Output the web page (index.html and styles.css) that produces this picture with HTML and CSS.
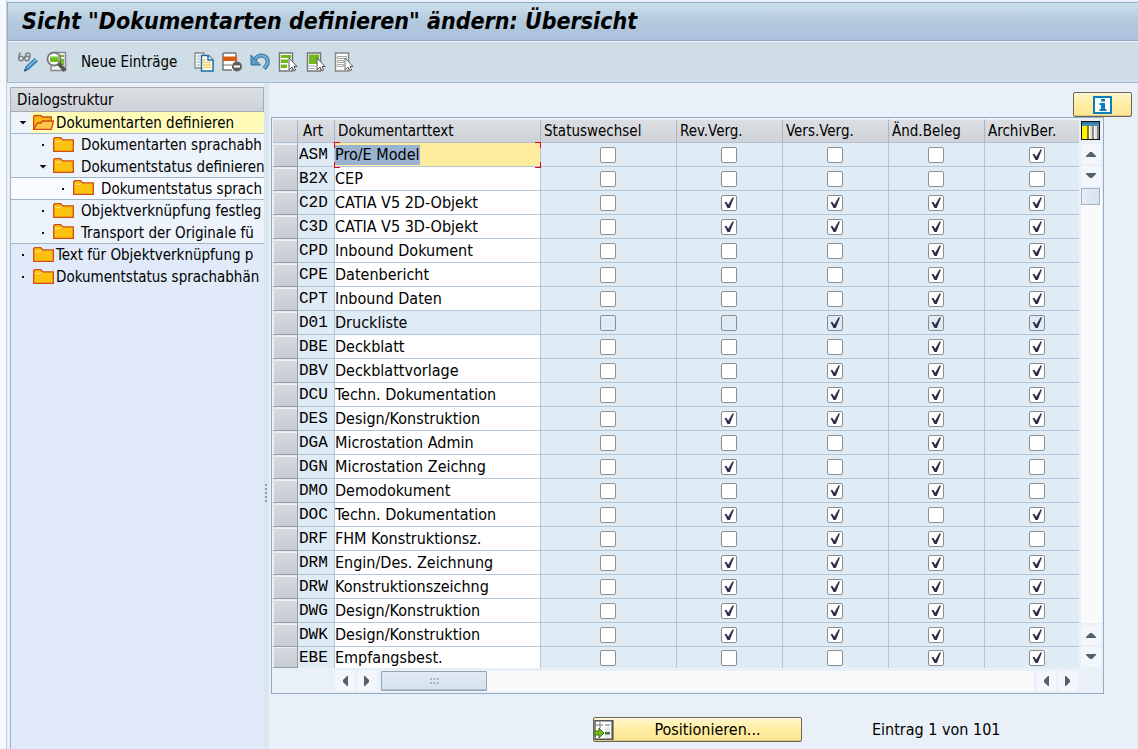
FILE: index.html
```html
<!DOCTYPE html>
<html lang="de">
<head>
<meta charset="utf-8">
<title>Sicht "Dokumentarten definieren" ändern: Übersicht</title>
<link rel="stylesheet" href="styles.css">
</head>
<body>
<svg class="sprite" aria-hidden="true">
  <symbol id="folder" viewBox="0 0 21 17"><path d="M.7 14.300V1.700l1-1h6l2 2.200h10.600v11.400z" fill="#fdc20f" stroke="#cf4a17" stroke-width="1.300"/><path d="M2 4.500h5l2-1.200" fill="none" stroke="#ffe07a"/></symbol>
  <symbol id="folder-open" viewBox="0 0 21 17"><path d="M.7 15.300V2.500l1-1h6l2 1.500h8.600v4" fill="#fdb913" stroke="#cf4a17" stroke-width="1.300"/><path d="M.7 15.300 4.500 9H8l1.500-2h11l-2.200 8.300z" fill="#fdc84a" stroke="#cf4a17" stroke-width="1.300"/></symbol>
</svg>
<div class="window">
  <header class="titlebar"><h1>Sicht "Dokumentarten definieren" ändern: Übersicht</h1></header>
  <div class="toolbar" role="toolbar" aria-label="Anwendung">
    <button class="tool wide" aria-label="Anzeigen/Ändern"><svg width="22" height="22" viewBox="0 0 22 22"><g fill="none" stroke="#777" stroke-width="1.300"><circle cx="4" cy="7.500" r="2.300"/><circle cx="10" cy="7.500" r="2.300"/><path d="M1.700 7 2.500 2.500 4 2M7.700 7 9 2.500l2-.5 2 1v4"/></g><path d="M7 20.500 8.500 15.500 17.500 7l3.500 3.200-9.500 8.800z" fill="#3385b5"/><path d="m10 17 9-8.500" stroke="#8fc3e0" stroke-width="1.200"/><path d="m7 20.500.8-2.800 2 2z" fill="#444"/></svg></button>
    <button class="tool wide" aria-label="Details"><svg width="22" height="22" viewBox="0 0 22 22"><path d="M10 1.500h9.500v18H5V15" fill="#eef2f4" stroke="#888" stroke-width="1.500"/><path d="M14 4h4v2h-4zM14 8h4v6h-4z" fill="#77b82a"/><circle cx="8" cy="8" r="6.500" fill="#fff" stroke="#777" stroke-width="1.800"/><path d="M4 5h9v6H4z" fill="#73b81c"/><path d="M4 5h9v1.500H4z" fill="#b5d98a"/><path d="m12.500 12.500 6.500 7" stroke="#555" stroke-width="4"/></svg></button>
    <button class="tool text">Neue Einträge</button>
    <button class="tool" aria-label="Kopieren als"><svg width="20" height="20" viewBox="0 0 20 20"><path d="M7 16H1V1h9v3" fill="#f4f7f9" stroke="#888" stroke-width="1.300"/><path d="M3 4h3M3 7h3M3 10h3M3 13h3" stroke="#aaa"/><path d="M7.500 3.500h7l4.500 4.500v11H7.500z" fill="#fff" stroke="#1c6ea4" stroke-width="1.500"/><path d="M14 3.500V8h5" fill="#fff" stroke="#1c6ea4" stroke-width="1.500"/><path d="M9 8h3M9 10.500h8M9 13h8M9 15.500h8" stroke="#f8cf55" stroke-width="1.600"/></svg></button>
    <button class="tool" aria-label="Löschen"><svg width="20" height="20" viewBox="0 0 20 20"><path d="M1 1h13v17H1z" fill="#fff"/><path d="M14 1v9M1 1h13M1 1v17h9" fill="none" stroke="#777" stroke-width="1.500"/><path d="M1 4.500h14V9H1z" fill="#db5a12"/><path d="M1 13h9" stroke="#777"/><circle cx="15" cy="14.500" r="5" fill="#606060"/><path d="M12 14.500h6" stroke="#fff" stroke-width="2"/></svg></button>
    <button class="tool" aria-label="Änderung zurücknehmen"><svg width="20" height="20" viewBox="0 0 20 20"><path d="M4 9C6 4.500 10 2.500 14 4c5 2.500 5 8 0 12.500" fill="none" stroke="#2f739f" stroke-width="4"/><path d="M4 9C6 4.500 10 2.500 14 4c5 2.500 5 8 0 12" fill="none" stroke="#78b0d3" stroke-width="2"/><path d="M1 3v10h9.500L7.500 10 4.500 7z" fill="#5b9dc6" stroke="#2f739f"/></svg></button>
    <button class="tool" aria-label="Alle markieren"><svg width="20" height="20" viewBox="0 0 20 20"><path d="M1.500 1h13v18h-13z" fill="#fff" stroke="#777" stroke-width="1.500"/><path d="M3 3h10v3H3zM3 7.500h7v3.500H3zM3 12.500h6V16H3z" fill="#73b81c"/><path d="M11 6v12l3-3 2 4 1.700-1-1.700-3.500h3z" fill="#fff" stroke="#555"/></svg></button>
    <button class="tool" aria-label="Block markieren"><svg width="20" height="20" viewBox="0 0 20 20"><path d="M1.500 1h13v18h-13z" fill="#fff" stroke="#777" stroke-width="1.500"/><path d="M3 2.500h10V12H3z" fill="#73b81c"/><path d="M3 14h6M3 16.500h6" stroke="#aaa"/><path d="M11 6v12l3-3 2 4 1.700-1-1.700-3.500h3z" fill="#fff" stroke="#555"/></svg></button>
    <button class="tool" aria-label="Alle entmarkieren"><svg width="20" height="20" viewBox="0 0 20 20"><path d="M1.500 1h13v18h-13z" fill="#fff" stroke="#888" stroke-width="1.500"/><path d="M3.500 4.500h9v2h-9zM3.500 8.500h6v2h-6zM3.500 12.500h6v2h-6z" fill="none" stroke="#aaa"/><path d="M11 6v12l3-3 2 4 1.700-1-1.700-3.500h3z" fill="#fff" stroke="#666"/></svg></button>
  </div>
  <div class="work">
    <nav class="tree" aria-label="Dialogstruktur">
      <h2>Dialogstruktur</h2>
      <ul>
        <li class="selected"><span class="mark open"></span><a href="#"><svg class="folder"><use href="#folder-open"/></svg>Dokumentarten definieren</a></li>
        <li class="l2"><span class="mark"></span><a href="#"><svg class="folder"><use href="#folder"/></svg>Dokumentarten sprachabh</a></li>
        <li class="l2 line"><span class="mark open"></span><a href="#"><svg class="folder"><use href="#folder"/></svg>Dokumentstatus definieren</a></li>
        <li class="l3 line"><span class="mark"></span><a href="#"><svg class="folder"><use href="#folder"/></svg>Dokumentstatus sprach</a></li>
        <li class="l2"><span class="mark"></span><a href="#"><svg class="folder"><use href="#folder"/></svg>Objektverknüpfung festleg</a></li>
        <li class="l2 line"><span class="mark"></span><a href="#"><svg class="folder"><use href="#folder"/></svg>Transport der Originale fü</a></li>
        <li><span class="mark"></span><a href="#"><svg class="folder"><use href="#folder"/></svg>Text für Objektverknüpfung p</a></li>
        <li><span class="mark"></span><a href="#"><svg class="folder"><use href="#folder"/></svg>Dokumentstatus sprachabhän</a></li>
      </ul>
    </nav>
    <div class="splitter"><svg width="4" height="18" viewBox="0 0 4 18"><path d="M2 0v18" stroke="#8fa0ae" stroke-width="2" stroke-dasharray="2 2"/></svg></div>
    <main class="content">
      <div class="info-row"><button class="gold info" aria-label="Information"><svg width="19" height="18" viewBox="0 0 19 18"><path d="M1 1h17v16H1z" fill="#fff" stroke="#0a7fc0" stroke-width="2"/><path d="M8 3h4v2.500H8zM6.500 7H12v6h1.500v2h-7v-2H8V9H6.500z" fill="#0a7fc0"/></svg></button></div>
      <div class="control">
        <div class="grid-row">
          <table>
            <colgroup><col class="c-sel"><col class="c-art"><col><col class="c-status"><col class="c-flag"><col class="c-flag"><col class="c-and"><col class="c-arch"></colgroup>
            <thead><tr><th aria-label="Markieren"></th><th class="art-head">Art</th><th>Dokumentarttext</th><th>Statuswechsel</th><th>Rev.Verg.</th><th>Vers.Verg.</th><th>Änd.Beleg</th><th>ArchivBer.</th></tr></thead>
            <tbody id="rows"></tbody>
          </table>
          <div class="vscroll">
            <button class="config" aria-label="Konfiguration"><svg width="19" height="19" viewBox="0 0 19 19"><path d="M0 0h19v19H0z" fill="#111"/><path d="M1 1h17v17H1z" fill="#fff"/><path d="M1 1h17v4H1z" fill="#3d8fc4"/><path d="M1 2h17" stroke="#226a9b"/><path d="M1 5h5v13H1z" fill="#fff200"/><path d="M6 4h2v14H6z" fill="#8a7c00"/><path d="M9 5h2v13H9zM14 5h2v13h-2z" fill="#ddd"/><path d="M11 4h2v14h-2zM16 4h2v14h-2z" fill="#888"/></svg></button>
            <button class="arrow" aria-label="Nach oben"><svg width="12" height="6" viewBox="0 0 12 6"><path d="M1 6V5l4-4h2l4 4v1z" fill="#52616b"/></svg></button>
            <button class="arrow" aria-label="Zeile nach unten"><svg width="12" height="6" viewBox="0 0 12 6"><path d="M1 0v1l4 4h2l4-4V0z" fill="#52616b"/></svg></button>
            <div class="vtrack"><div class="vthumb"></div></div>
            <button class="arrow" aria-label="Zeile nach oben"><svg width="12" height="6" viewBox="0 0 12 6"><path d="M1 6V5l4-4h2l4 4v1z" fill="#52616b"/></svg></button>
            <button class="arrow" aria-label="Nach unten"><svg width="12" height="6" viewBox="0 0 12 6"><path d="M1 0v1l4 4h2l4-4V0z" fill="#52616b"/></svg></button>
          </div>
        </div>
        <div class="hscroll">
          <button class="arrow" aria-label="Nach links"><svg width="6" height="12" viewBox="0 0 6 12"><path d="M6 1H5L1 5v2l4 4h1z" fill="#52616b"/></svg></button>
          <button class="arrow" aria-label="Spalte nach rechts"><svg width="6" height="12" viewBox="0 0 6 12"><path d="M0 1h1l4 4v2l-4 4H0z" fill="#52616b"/></svg></button>
          <div class="htrack"><div class="hthumb"><svg width="9" height="6" viewBox="0 0 9 6"><path d="M0 1h9M0 5h9" stroke="#94a6b5" stroke-width="1.500" stroke-dasharray="2 1.500"/></svg></div></div>
          <button class="arrow" aria-label="Spalte nach links"><svg width="6" height="12" viewBox="0 0 6 12"><path d="M6 1H5L1 5v2l4 4h1z" fill="#52616b"/></svg></button>
          <button class="arrow" aria-label="Nach rechts"><svg width="6" height="12" viewBox="0 0 6 12"><path d="M0 1h1l4 4v2l-4 4H0z" fill="#52616b"/></svg></button>
        </div>
      </div>
      <footer class="position">
        <button class="gold goto"><svg width="20" height="20" viewBox="0 0 20 20"><path d="M1 .7h17.500v18.600H1z" fill="#fff" stroke="#555" stroke-width="1.400"/><path d="M17.500 0h2v20h-2z" fill="#555"/><path d="M2 5h7M6 2v6M11 5h5" stroke="#999" stroke-width="1.300"/><path d="M11 7h5v11h-5z" fill="#e8e8e8"/><path d="M11 12h5v2.500h-5z" fill="#2f7d46"/><path d="M0 11h5V8l5 5-5 5V15H0z" fill="#73b81c" stroke="#397316"/></svg><span>Positionieren...</span></button>
        <p>Eintrag 1 von 101</p>
      </footer>
    </main>
  </div>
</div>
<script src="rows.js"></script>
</body>
</html>
```
FILE: styles.css
```css
* { box-sizing: border-box; }
body, h1, h2, p, ul { margin: 0; padding: 0; }
body {
  background: #f4f7fb;
  color: #000;
  font: 16px/22px "DejaVu Sans Condensed", "Noto Sans", sans-serif;
}
button, input { font: inherit; color: inherit; margin: 0; padding: 0; border: 0; }
button { background: none; }
svg { display: block; flex: none; }
.sprite { position: absolute; width: 0; height: 0; }
.window {
  display: flex;
  flex-direction: column;
  min-height: 100vh;
  margin-left: 6px;
  padding-top: 2px;
  background: #e9f0f8;
  border-left: 1px solid #c3d0dc;
}
.titlebar {
  padding: 1px 14px 2px;
  border: 1px solid #8fabc7;
  border-right: 0;
  background: linear-gradient(#cddfec, #b3c9dc 50%, #abc1dc);
}
.titlebar h1 { font-size: 23px; line-height: 34px; font-style: italic; font-weight: 700; white-space: nowrap; }
.toolbar {
  display: flex;
  align-items: center;
  gap: 8px;
  height: 42px;
  padding: 0 9px;
  border: 1px solid #a5b9cd;
  border-top: 1px solid #edf4f8;
  border-right: 0;
  background: #cfdde7;
}
.tool.wide { width: 21px; }
.tool.text { margin: 0 9px 0 6px; font-size: 15px; white-space: nowrap; }
.work { display: flex; flex: 1; padding-left: 3px; }
.tree {
  width: 254px;
  margin-top: 4px;
  flex: none;
  overflow: hidden;
  background: #e0eaf8;
  border-left: 1px solid #9db3c9;
}
.tree h2 {
  height: 25px;
  padding: 0 6px;
  border: 1px solid #a6adb5;
  border-left: 0;
  background: linear-gradient(#dcdfe2, #cdd1d7);
  font-size: 15px;
  line-height: 24px;
  font-weight: 400;
}
.tree ul { list-style: none; }
.tree li { display: flex; height: 22px; white-space: nowrap; background: #e0eaf8; }
.tree .l2 { padding-left: 20px; background: #ecf3fb; }
.tree .l3 { padding-left: 40px; background: #f8fbff; }
.tree .line, .tree .selected { border-bottom: 1px solid #a3b6c9; }
.tree .selected { background: #ecf3fb; }
.tree a { display: flex; flex: 1; align-items: center; gap: 2px; padding-left: 2px; color: #000; font-size: 15px; text-decoration: none; }
.tree .l2 a, .tree .l3 a { gap: 7px; }
.tree .selected a { background: #fffcba; }
.folder { width: 21px; height: 17px; }
.mark { display: grid; place-items: center; width: 20px; padding-left: 4px; flex: none; }
.mark::before { content: ""; width: 2px; height: 2px; background: #111; }
.mark.open::before { width: 8px; height: 4px; clip-path: polygon(0 0, 100% 0, 50% 100%); }
.splitter { width: 5px; padding-top: 401px; flex: none; background: #dae5ec; }
.content { flex: 1; min-width: 0; padding: 9px 6px 6px 2px; }
.gold {
  border: 1px solid #6b6754;
  border-radius: 2px;
  background: linear-gradient(#fff5cc, #ffeda0 50%, #fde795);
  box-shadow: inset 0 1px #fffbe5, inset 0 -1px #dcc883;
}
.info-row { display: flex; justify-content: flex-end; }
.info { display: grid; place-items: center; width: 59px; height: 25px; }
.control { margin-right: 28px; padding: 1px 1px 2px 1px; border: 1px solid #8fadc8; }
.grid-row { display: flex; gap: 2px; }
table { flex: 1; width: 100%; min-width: 0; border-collapse: separate; border-spacing: 0; table-layout: fixed; }
.c-sel { width: 25px; }
.c-art { width: 37px; }
.c-status { width: 136px; }
.c-flag { width: 106px; }
.c-and { width: 96px; }
.c-arch { width: 94px; }
th {
  height: 24px;
  padding: 0 3px;
  border-right: 1px solid #a9b5c2;
  border-bottom: 1px solid #b4c0ce;
  border-top: 1px solid #eef1f4;
  background: linear-gradient(#dbdfe2, #cfd3d9);
  font-weight: 400;
  font-size: 15px;
  line-height: 22px;
  text-align: left;
  white-space: nowrap;
}
th.art-head { padding-left: 5px; }
td {
  height: 24px;
  padding: 0;
  border-right: 1px solid #b6c5d4;
  border-bottom: 1px solid #b6c5d4;
  background: #dfebf5;
  vertical-align: middle;
}
tr:last-child td { height: 21px; border-bottom: 0; }
th:last-child, td:last-child { border-right: 0; }
td.sel { border-right: 1px solid #929ba7; border-bottom: 1px solid #929ba7; }
.sel button { display: block; width: 100%; height: 22px; background: linear-gradient(#d5d9df, #c7ccd4); border-top: 1px solid #eef1f4; border-left: 1px solid #eef1f4; }
tr:last-child .sel { border-bottom: 1px solid #929ba7; }
tr:last-child .sel button { height: 20px; }
.art { padding-left: 1px; font: 16px/18px "Liberation Mono", monospace; white-space: nowrap; }
.name { background: #fff; }
.name input { display: block; width: 100%; height: 20px; padding: 0; background: transparent; line-height: 20px; outline: 0; }
.current .name { background: #ffec9e; position: relative; }
.current .name input::selection { background: #9ab3d0; color: #000; }
.corners { position: absolute; top: -1px; left: -1px; width: calc(100% + 2px); height: 26px; pointer-events: none;
  --c: #e2001a;
  background:
    linear-gradient(var(--c), var(--c)) 0 0 / 6px 1px, linear-gradient(var(--c), var(--c)) 0 0 / 1px 6px,
    linear-gradient(var(--c), var(--c)) 100% 0 / 6px 1px, linear-gradient(var(--c), var(--c)) 100% 0 / 1px 6px,
    linear-gradient(var(--c), var(--c)) 0 100% / 6px 1px, linear-gradient(var(--c), var(--c)) 0 100% / 1px 6px,
    linear-gradient(var(--c), var(--c)) 100% 100% / 6px 1px, linear-gradient(var(--c), var(--c)) 100% 100% / 1px 6px;
  background-repeat: no-repeat;
}
.locked .name { background: #dfebf5; }
.flag { padding-right: 1px; }
.flag input {
  display: grid;
  place-items: center;
  width: 16px;
  height: 16px;
  margin: 0 auto;
  appearance: none;
  border: 1px solid #8d8d8d;
  border-radius: 2px;
  background: #fff;
}
.flag:last-child { padding-left: 11px; }
.locked .flag input { background: #dfebf5; }
.flag input:checked::before { content: ""; width: 10px; height: 11px; background: #2d2d4c; clip-path: polygon(5% 45%, 25% 45%, 42% 70%, 85% 5%, 100% 5%, 58% 100%, 35% 100%); }
.vscroll { display: flex; flex-direction: column; gap: 2px; width: 21px; padding: 2px 0 1px; }
.arrow { display: grid; place-items: center; width: 20px; height: 20px; flex: none; background: #f3f6fb; }
.config { margin-bottom: 2px; }
.vtrack { flex: 1; background: #fafafa; }
.vthumb { height: 17px; width: 19px; border: 1px solid #a5b3c1; background: linear-gradient(90deg, #e5edf6, #d6e2ee); }
.hscroll { display: flex; gap: 2px; padding: 3px 24px 0 62px; }
.htrack { flex: 1; background: #fafafa; margin-left: 2px; }
.hthumb { display: grid; place-items: center; width: 106px; height: 20px; border: 1px solid #91a5b7; border-radius: 1px; background: linear-gradient(#e2ebf4, #d5e2ee); box-shadow: inset 0 -1px #b4c3d1; }
.position { display: flex; align-items: center; gap: 70px; padding: 23px 0 0 322px; }
.goto { display: flex; align-items: center; width: 209px; height: 25px; }
.goto span { flex: 1; text-align: center; }
.position p { white-space: nowrap; }
```
FILE: rows.js
```js
const columns = ["Statuswechsel", "Rev.Verg.", "Vers.Verg.", "Änd.Beleg", "ArchivBer."];
// Each entry: key, description, one digit per checkbox column.
const entries = [
  ["ASM", "Pro/E Model", "00001"],
  ["B2X", "CEP", "00000"],
  ["C2D", "CATIA V5 2D-Objekt", "01111"],
  ["C3D", "CATIA V5 3D-Objekt", "01111"],
  ["CPD", "Inbound Dokument", "00011"],
  ["CPE", "Datenbericht", "00011"],
  ["CPT", "Inbound Daten", "00011"],
  ["D01", "Druckliste", "00111"],
  ["DBE", "Deckblatt", "00011"],
  ["DBV", "Deckblattvorlage", "00111"],
  ["DCU", "Techn. Dokumentation", "00111"],
  ["DES", "Design/Konstruktion", "01111"],
  ["DGA", "Microstation Admin", "00010"],
  ["DGN", "Microstation Zeichng", "01010"],
  ["DMO", "Demodokument", "00110"],
  ["DOC", "Techn. Dokumentation", "01101"],
  ["DRF", "FHM Konstruktionsz.", "00110"],
  ["DRM", "Engin/Des. Zeichnung", "01111"],
  ["DRW", "Konstruktionszeichng", "01111"],
  ["DWG", "Design/Konstruktion", "01111"],
  ["DWK", "Design/Konstruktion", "01111"],
  ["EBE", "Empfangsbest.", "00011"]
];
document.getElementById("rows").innerHTML = entries.map(([art, name, flags], i) => {
  const state = i === 0 ? "current" : art === "D01" ? "locked" : "";
  const boxes = columns.map((c, k) =>
    `<td class="flag"><input type="checkbox" aria-label="${art} ${c}"${flags[k] === "1" ? " checked" : ""}></td>`).join("");
  return `<tr class="${state}"><td class="sel"><button aria-label="Zeile ${art} markieren"></button></td>` +
    `<td class="art">${art}</td><td class="name"><input type="text" aria-label="Dokumentarttext ${art}" value="${name}"${state === "locked" ? " readonly" : ""}>` +
    `${i === 0 ? '<span class="corners"></span>' : ""}</td>${boxes}</tr>`;
}).join("");
document.querySelector(".current .name input").select();
```
